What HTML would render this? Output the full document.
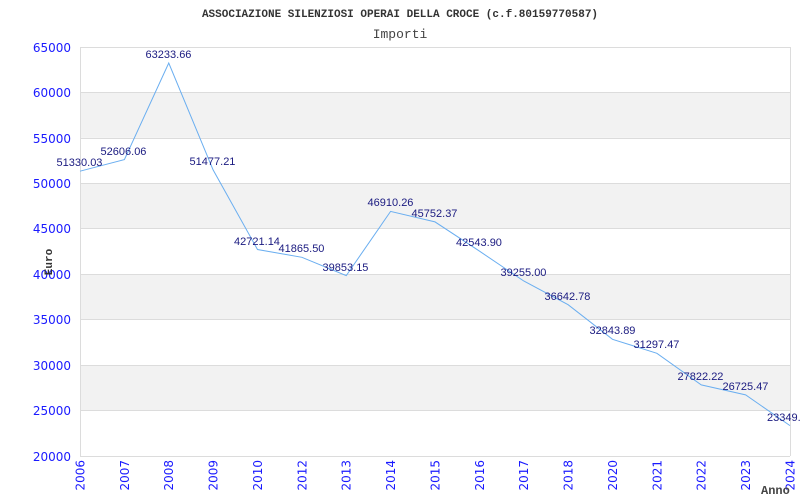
<!DOCTYPE html>
<html><head><meta charset="utf-8"><style>body{margin:0;background:#fff}svg{display:block}</style></head><body>
<svg width="800" height="500" xmlns="http://www.w3.org/2000/svg">
<rect width="800" height="500" fill="#fff"/>
<g fill="#f2f2f2">
<rect x="80" y="92.4" width="710" height="45.4"/>
<rect x="80" y="183.3" width="710" height="45.4"/>
<rect x="80" y="274.2" width="710" height="45.4"/>
<rect x="80" y="365.1" width="710" height="45.4"/>
</g>
<g stroke="#dcdcdc" stroke-width="1">
<line x1="80" y1="47.5" x2="790" y2="47.5"/><line x1="80" y1="92.5" x2="790" y2="92.5"/><line x1="80" y1="138.5" x2="790" y2="138.5"/><line x1="80" y1="183.5" x2="790" y2="183.5"/><line x1="80" y1="228.5" x2="790" y2="228.5"/><line x1="80" y1="274.5" x2="790" y2="274.5"/><line x1="80" y1="319.5" x2="790" y2="319.5"/><line x1="80" y1="365.5" x2="790" y2="365.5"/><line x1="80" y1="410.5" x2="790" y2="410.5"/><line x1="80" y1="456.5" x2="790" y2="456.5"/>
<line x1="80.5" y1="47" x2="80.5" y2="456"/><line x1="790.5" y1="47" x2="790.5" y2="456"/>
</g>
<polyline fill="none" stroke="#6aaef0" stroke-width="1" points="80,171.2 124.4,159.6 168.75,63 213.1,169.9 257.5,249.5 301.9,257.3 346.25,275.6 390.6,211.4 435,221.9 479.4,251.1 523.75,281 568.1,304.7 612.5,339.3 656.9,353.3 701.25,384.9 745.6,394.9 790,425.6"/>
<g font-family="Liberation Sans, sans-serif" font-size="11" fill="#1a1a80" text-anchor="middle">
<text x="79.5" y="166">51330.03</text><text x="123.5" y="155">52606.06</text><text x="168.5" y="58">63233.66</text><text x="212.5" y="165">51477.21</text><text x="257" y="245">42721.14</text><text x="301.5" y="252">41865.50</text><text x="345.5" y="271">39853.15</text><text x="390.5" y="206">46910.26</text><text x="434.5" y="217">45752.37</text><text x="479" y="246">42543.90</text><text x="523.5" y="276">39255.00</text><text x="567.5" y="300">36642.78</text><text x="612.5" y="334">32843.89</text><text x="656.5" y="348">31297.47</text><text x="700.5" y="380">27822.22</text><text x="745.5" y="390">26725.47</text><text x="767" y="421" text-anchor="start">23349.</text>
</g>
<g font-family="DejaVu Sans, sans-serif" font-size="12" fill="#1a1aff" text-anchor="end">
<text x="71" y="52">65000</text><text x="71" y="97">60000</text><text x="71" y="143">55000</text><text x="71" y="188">50000</text><text x="71" y="233">45000</text><text x="71" y="279">40000</text><text x="71" y="324">35000</text><text x="71" y="370">30000</text><text x="71" y="415">25000</text><text x="71" y="461">20000</text>
</g>
<g font-family="DejaVu Sans, sans-serif" font-size="12" fill="#1a1aff" text-anchor="end">
<text transform="translate(84.5,460) rotate(-90)">2006</text>
<text transform="translate(128.9,460) rotate(-90)">2007</text>
<text transform="translate(173.2,460) rotate(-90)">2008</text>
<text transform="translate(217.6,460) rotate(-90)">2009</text>
<text transform="translate(262,460) rotate(-90)">2010</text>
<text transform="translate(306.4,460) rotate(-90)">2012</text>
<text transform="translate(350.7,460) rotate(-90)">2013</text>
<text transform="translate(395.1,460) rotate(-90)">2014</text>
<text transform="translate(439.5,460) rotate(-90)">2015</text>
<text transform="translate(483.9,460) rotate(-90)">2016</text>
<text transform="translate(528.2,460) rotate(-90)">2017</text>
<text transform="translate(572.6,460) rotate(-90)">2018</text>
<text transform="translate(617,460) rotate(-90)">2020</text>
<text transform="translate(661.4,460) rotate(-90)">2021</text>
<text transform="translate(705.7,460) rotate(-90)">2022</text>
<text transform="translate(750.1,460) rotate(-90)">2023</text>
<text transform="translate(794.5,460) rotate(-90)">2024</text>
</g>
<text x="400" y="17" font-family="Liberation Mono, monospace" font-weight="bold" font-size="11" fill="#333" text-anchor="middle">ASSOCIAZIONE SILENZIOSI OPERAI DELLA CROCE (c.f.80159770587)</text>
<text x="400" y="38" font-family="Liberation Mono, monospace" font-size="13" fill="#444" text-anchor="middle">Importi</text>
<text transform="translate(52,262) rotate(-90)" font-family="Liberation Mono, monospace" font-weight="bold" font-size="11" fill="#333" text-anchor="middle">Euro</text>
<text x="761" y="494" font-family="Liberation Mono, monospace" font-weight="bold" font-size="12" fill="#444">Anno</text>
</svg>
</body></html>
